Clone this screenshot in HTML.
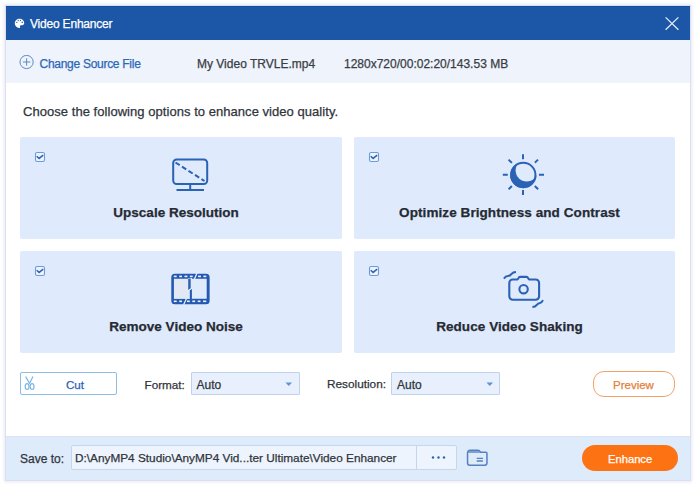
<!DOCTYPE html>
<html><head><meta charset="utf-8">
<style>
html,body{margin:0;padding:0;width:696px;height:486px;overflow:hidden;background:#fff;}
body{font-family:"Liberation Sans",sans-serif;position:relative;}
.a{position:absolute;}
.win{left:6px;top:6px;width:684px;height:474px;background:#fff;box-shadow:0 0 0 1px #dcdfef,0 0 3px 2px rgba(200,203,232,0.45);}
.title{left:6px;top:6px;width:684px;height:34px;background:#1b56a7;box-shadow:inset 0 1px 0 #0f4ea5;}
.info{left:6px;top:40px;width:684px;height:43px;background:#eef3fc;}
.foot{left:6px;top:436px;width:684px;height:44px;background:#deebfb;box-shadow:inset 0 1px 0 #d9e3f3;}
.t{white-space:nowrap;line-height:1;-webkit-text-stroke:0.25px currentColor;}
.card{background:#dfebfc;border-radius:2px;}
.card .h{position:absolute;left:0;width:100%;text-align:center;font-weight:bold;font-size:13.5px;color:#262a33;}
.chk{width:8px;height:8px;border:1.3px solid #6e9bd6;border-radius:2px;background:#f4f8fe;}
.sel{background:#e7f0fc;border:1px solid #bfd2ea;border-radius:1px;box-sizing:border-box;}
</style></head><body>
<div class="a win"></div>
<div class="a title"></div>
<!-- palette icon -->
<svg class="a" style="left:14px;top:18px" width="11" height="11" viewBox="0 0 11 11">
<path d="M5.6 0.8C3 0.8 0.8 2.7 0.8 5.3c0 2.5 2 4.7 4.4 4.7 0.8 0 1.1-0.5 0.9-1.1-0.3-0.7-0.1-1.6 0.8-1.6h1.2c1.4 0 2.1-0.9 2.1-2.2C10.2 2.6 8.1 0.8 5.6 0.8z" fill="#fff"/>
<circle cx="2.8" cy="4.4" r="0.65" fill="#2a5fae"/><circle cx="4.2" cy="2.5" r="0.65" fill="#2a5fae"/><circle cx="6.4" cy="2.5" r="0.65" fill="#2a5fae"/><circle cx="8.2" cy="4.3" r="0.75" fill="#1b56a7"/>
</svg>
<div class="a t" style="left:30px;top:18px;font-size:12px;letter-spacing:-0.2px;color:#fff;">Video Enhancer</div>
<svg class="a" style="left:664px;top:16px" width="16" height="16" viewBox="0 0 16 16">
<path d="M1.6 1.4L14.4 13.8M14.4 1.4L1.6 13.8" stroke="#e4ebf6" stroke-width="1.3" fill="none"/>
</svg>

<div class="a info"></div>
<svg class="a" style="left:19px;top:55px" width="15" height="15" viewBox="0 0 15 15">
<circle cx="7.6" cy="7.0" r="6.6" stroke="#6189c0" stroke-width="1" fill="none"/>
<path d="M7.6 3.3v7.4M3.9 7.0h7.4" stroke="#6189c0" stroke-width="1"/>
</svg>
<div class="a t" style="left:39.5px;top:58px;font-size:12px;letter-spacing:-0.28px;color:#2c67b6;">Change Source File</div>
<div class="a t" style="left:197px;top:58px;font-size:12px;color:#3a3d44;">My Video TRVLE.mp4</div>
<div class="a t" style="left:344px;top:58px;font-size:12px;color:#3a3d44;">1280x720/00:02:20/143.53 MB</div>

<div class="a t" style="left:23px;top:105px;font-size:13px;letter-spacing:0.045px;color:#30343c;">Choose the following options to enhance video quality.</div>

<!-- cards -->
<div class="a card" style="left:20px;top:137px;width:322px;height:102px;">
  <div class="h t" style="top:69px;left:-5px">Upscale Resolution</div>
</div>
<div class="a card" style="left:354px;top:137px;width:321px;height:102px;">
  <div class="h t" style="top:69px;left:-5px;letter-spacing:0.08px">Optimize Brightness and Contrast</div>
</div>
<div class="a card" style="left:20px;top:251px;width:322px;height:102px;">
  <div class="h t" style="top:69px;left:-5px">Remove Video Noise</div>
</div>
<div class="a card" style="left:354px;top:251px;width:321px;height:102px;">
  <div class="h t" style="top:69px;left:-5px;letter-spacing:0.07px">Reduce Video Shaking</div>
</div>

<!-- checkboxes -->
<svg class="a" style="left:34px;top:151px" width="12" height="12" viewBox="0 0 12 12"><rect x="1.5" y="1.5" width="9" height="9" rx="1.6" fill="#eef4fd" stroke="#6e9bd6" stroke-width="1.1"/><path d="M2.7 5.3l2.4 2.1 4.1-3.3" stroke="#2d62b8" stroke-width="1.5" fill="none"/></svg>
<svg class="a" style="left:368px;top:151px" width="12" height="12" viewBox="0 0 12 12"><rect x="1.5" y="1.5" width="9" height="9" rx="1.6" fill="#eef4fd" stroke="#6e9bd6" stroke-width="1.1"/><path d="M2.7 5.3l2.4 2.1 4.1-3.3" stroke="#2d62b8" stroke-width="1.5" fill="none"/></svg>
<svg class="a" style="left:34px;top:265px" width="12" height="12" viewBox="0 0 12 12"><rect x="1.5" y="1.5" width="9" height="9" rx="1.6" fill="#eef4fd" stroke="#6e9bd6" stroke-width="1.1"/><path d="M2.7 5.3l2.4 2.1 4.1-3.3" stroke="#2d62b8" stroke-width="1.5" fill="none"/></svg>
<svg class="a" style="left:368px;top:265px" width="12" height="12" viewBox="0 0 12 12"><rect x="1.5" y="1.5" width="9" height="9" rx="1.6" fill="#eef4fd" stroke="#6e9bd6" stroke-width="1.1"/><path d="M2.7 5.3l2.4 2.1 4.1-3.3" stroke="#2d62b8" stroke-width="1.5" fill="none"/></svg>

<!-- monitor icon -->
<svg class="a" style="left:170px;top:156px" width="40" height="36" viewBox="0 0 40 36">
<rect x="3.2" y="3.5" width="34" height="24.5" rx="3.5" fill="none" stroke="#2a62b5" stroke-width="2"/>
<path d="M5.5 6.5L34.5 25" stroke="#2a62b5" stroke-width="2" stroke-dasharray="5 2.7"/>
<path d="M20.2 28v5M6.5 34h27.5" stroke="#2a62b5" stroke-width="2"/>
</svg>

<!-- sun icon -->
<svg class="a" style="left:500px;top:152px" width="46" height="46" viewBox="0 0 46 46">
<g stroke="#2a62b5" stroke-width="2" stroke-linecap="butt">
<path d="M23 2.2v5M23 38v5M2.8 22.8h5M39 22.8h5M8.6 7.6l3.3 3.3M34.8 34l3.3 3.3M38 7.6l-3.3 3.3M11.9 34l-3.3 3.3"/>
</g>
<circle cx="23.3" cy="23" r="13.15" fill="#2a62b5"/>
<circle cx="26.7" cy="18.3" r="11.1" fill="#dfebfc"/>
<circle cx="23.3" cy="23" r="12.15" fill="none" stroke="#2a62b5" stroke-width="2"/>
</svg>
<!-- film icon -->
<svg class="a" style="left:166px;top:268px" width="50" height="40" viewBox="0 0 50 40">
<path fill-rule="evenodd" fill="#2558b0" d="M8.8 5.8h31.3a3.5 3.5 0 0 1 3.5 3.5v23.4a3.5 3.5 0 0 1-3.5 3.5H8.8a3.5 3.5 0 0 1-3.5-3.5V9.3a3.5 3.5 0 0 1 3.5-3.5z M7.9 10.7h14.3v20.1H7.9z M25.9 10.7h14.8v20.1H25.9z"/>
<rect x="22" y="10" width="4" height="21" fill="#dfebfc"/>
<rect x="22.2" y="10.5" width="2.5" height="11.5" fill="#2f62b3"/>
<rect x="23.8" y="21" width="2.1" height="10" fill="#2558b0"/>
<rect x="8.2" y="11" width="13.8" height="19.6" fill="#e3e9f4"/>
<g fill="#eaf1fb">
<rect x="7.8" y="7.6" width="2.9" height="1.6"/><rect x="13.2" y="7.6" width="2.8" height="1.6"/><rect x="18.5" y="7.6" width="2.9" height="1.6"/><rect x="23.8" y="7.6" width="2.9" height="1.6"/><rect x="32" y="7.6" width="3" height="1.6"/><rect x="37.4" y="7.6" width="2.9" height="1.6"/>
<rect x="7.8" y="32.5" width="2.9" height="1.6"/><rect x="13.2" y="32.5" width="2.8" height="1.6"/><rect x="21" y="32.5" width="2.8" height="1.6"/><rect x="26.3" y="32.5" width="2.9" height="1.6"/><rect x="31.7" y="32.5" width="2.8" height="1.6"/><rect x="37" y="32.5" width="3.3" height="1.6"/>
</g>
<path d="M31.3 4.5L28.3 11.2M21.6 23L26.4 20M20.6 30.3L17.6 36.7" stroke="#e3edfb" stroke-width="1.3" fill="none"/>
</svg>
<!-- camera icon -->
<svg class="a" style="left:500px;top:268px" width="46" height="42" viewBox="0 0 46 42">
<path d="M12.7 11.5h4.5c1 0 1.2-2.6 2.8-2.6h6.6c1.6 0 1.8 2.6 2.8 2.6h6.3c1.9 0 3.4 1.5 3.4 3.4v13.4c0 1.9-1.5 3.4-3.4 3.4H12.7c-1.9 0-3.4-1.5-3.4-3.4V14.9c0-1.9 1.5-3.4 3.4-3.4z" fill="none" stroke="#2a62b5" stroke-width="2.1"/>
<circle cx="23.6" cy="21.2" r="4.2" fill="none" stroke="#2a62b5" stroke-width="2.1"/>
<path d="M3.9 10.6C5.2 8.6 6.4 7.9 8 7.9C9.6 7.9 10.4 7.4 11.6 5.8C12.6 4.5 14 3.9 16 3.9" fill="none" stroke="#2a62b5" stroke-width="2"/>
<path d="M32.4 38.9C34.4 38.9 35.8 38.2 36.8 36.8C37.8 35.4 38.6 35 40 34.9C41.4 34.8 42.3 33.8 43 32.2" fill="none" stroke="#2a62b5" stroke-width="2"/>
</svg>
<!-- bottom controls -->
<div class="a" style="left:20px;top:372px;width:97px;height:23px;box-sizing:border-box;border:1.2px solid #8cbde5;border-radius:2px;background:#fff;"></div>
<svg class="a" style="left:23px;top:376px" width="13" height="15" viewBox="0 0 13 15">
<path d="M2.6 0.6L6.6 7.2L10 0.6" stroke="#7ab5e3" stroke-width="1.2" fill="none"/>
<ellipse cx="4.1" cy="10.6" rx="1.9" ry="2.9" fill="none" stroke="#7ab5e3" stroke-width="1.2"/>
<ellipse cx="9.1" cy="10.6" rx="1.9" ry="2.9" fill="none" stroke="#7ab5e3" stroke-width="1.2"/>
</svg>
<div class="a t" style="left:66px;top:379px;font-size:11.6px;color:#2863b8;">Cut</div>

<div class="a t" style="left:144.5px;top:379px;font-size:11.7px;color:#30343c;">Format:</div>
<div class="a sel" style="left:191px;top:372px;width:109px;height:23px;"></div>
<div class="a t" style="left:196.5px;top:379px;font-size:12px;color:#30343c;">Auto</div>
<svg class="a" style="left:285px;top:382px" width="8" height="5" viewBox="0 0 8 5"><path d="M0.5 0.5h6.5L3.75 4z" fill="#5b95d2"/></svg>

<div class="a t" style="left:327px;top:379px;font-size:11.8px;color:#30343c;">Resolution:</div>
<div class="a sel" style="left:391px;top:372px;width:109px;height:23px;"></div>
<div class="a t" style="left:397px;top:379px;font-size:12px;color:#30343c;">Auto</div>
<svg class="a" style="left:486px;top:382px" width="8" height="5" viewBox="0 0 8 5"><path d="M0.5 0.5h6.5L3.75 4z" fill="#5b95d2"/></svg>

<div class="a" style="left:593px;top:371px;width:82px;height:26px;box-sizing:border-box;border:1.6px solid #f1a46a;border-radius:11px;background:#fff;"></div>
<div class="a t" style="left:613px;top:380px;font-size:11.5px;color:#e57f3a;">Preview</div>

<!-- footer -->
<div class="a foot"></div>
<div class="a t" style="left:20px;top:453px;font-size:12px;color:#30343c;">Save to:</div>
<div class="a" style="left:71px;top:445px;width:386px;height:25px;box-sizing:border-box;border:1px solid #c3d6ee;border-radius:2px;background:#eef4fd;"></div>
<div class="a" style="left:416px;top:446px;width:1px;height:23px;background:#c3d6ee;"></div>
<div class="a t" style="left:75px;top:453px;font-size:11.8px;color:#30343c;">D:\AnyMP4 Studio\AnyMP4 Vid...ter Ultimate\Video Enhancer</div>
<svg class="a" style="left:431px;top:455px" width="16" height="5" viewBox="0 0 16 5"><circle cx="2" cy="2.5" r="1.2" fill="#3262a8"/><circle cx="7.5" cy="2.5" r="1.2" fill="#3262a8"/><circle cx="13" cy="2.5" r="1.2" fill="#3262a8"/></svg>
<svg class="a" style="left:465px;top:448px" width="24" height="20" viewBox="0 0 24 20">
<path d="M2.55 5.2c0-1.6 1.2-2.85 2.8-2.85h7.6c1.2 0 1.9 0.5 2.6 1.9h5.3c0.65 0 1.1 0.5 1.1 1.1v9.6c0 1.2-1 2.2-2.2 2.2H4.75c-1.2 0-2.2-1-2.2-2.2z" fill="none" stroke="#5581c0" stroke-width="1.5"/>
<path d="M3.4 4h11.4" stroke="#5581c0" stroke-width="1.4"/>
<path d="M11.7 10.4h6.2M11.7 13h6.2" stroke="#5581c0" stroke-width="1.3"/>
</svg>
<div class="a" style="left:582px;top:445px;width:96px;height:26px;border-radius:13px;background:#fd7213;"></div>
<div class="a t" style="left:608px;top:454px;font-size:11.2px;color:#fff;">Enhance</div>
</body></html>
